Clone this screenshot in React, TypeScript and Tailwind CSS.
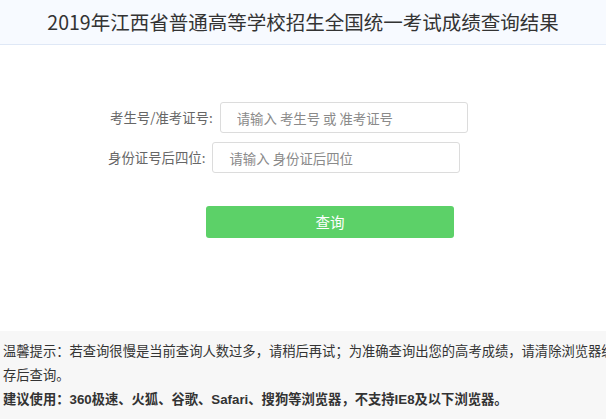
const FONT = "font-['Microsoft_YaHei','Noto_Sans_CJK_SC',sans-serif]";

function Field({ label, placeholder, indent }: { label: string; placeholder: string; indent: string }) {
  return (
    <div className={`flex items-center ${indent}`}>
      <span className="text-[13.4px] text-[#666] whitespace-nowrap">{label}</span>
      <input
        className="ml-[7px] h-[31px] w-[248px] rounded-[3px] border border-[#dcdcdc] bg-white pl-[16px] text-[13.4px] text-[#333] outline-none placeholder:text-[#8a8a8a]"
        placeholder={placeholder}
      />
    </div>
  );
}

export default function App() {
  return (
    <div className={`w-full h-[419px] overflow-hidden bg-white flex flex-col ${FONT}`}>
      {/* Title bar */}
      <header className="h-[45px] shrink-0 bg-[#f7faff] border-b border-[#dfe8f6] flex items-center justify-center">
        <h1 className="text-[19.5px] text-[#333] leading-none whitespace-nowrap">
          2019年江西省普通高等学校招生全国统一考试成绩查询结果
        </h1>
      </header>

      {/* Query form */}
      <div className="pt-[57px] flex flex-col gap-[9px]">
        <Field label="考生号/准考证号:" placeholder="请输入 考生号 或 准考证号" indent="pl-[110px]" />
        <Field label="身份证号后四位:" placeholder="请输入 身份证后四位" indent="pl-[108px]" />
      </div>
      <div className="pt-[33px] pl-[206px]">
        <button className="h-[32px] w-[248px] rounded-[3px] bg-[#5cd168] text-[14.5px] text-white">
          查询
        </button>
      </div>

      {/* Notice */}
      <div className="mt-auto h-[88px] w-[622px] shrink-0 bg-[#f7f7f7] pl-[3px] pt-[9px] font-['Liberation_Sans','Noto_Sans_CJK_SC',sans-serif] text-[13.3px] leading-[24px] text-[#333]">
        <p>
          温馨提示：若查询很慢是当前查询人数过多，请稍后再试；为准确查询出您的高考成绩，请清除浏览器缓存后查询。
        </p>
        <p className="font-bold">建议使用：360极速、火狐、谷歌、Safari、搜狗等浏览器，不支持IE8及以下浏览器。</p>
      </div>
    </div>
  );
}
